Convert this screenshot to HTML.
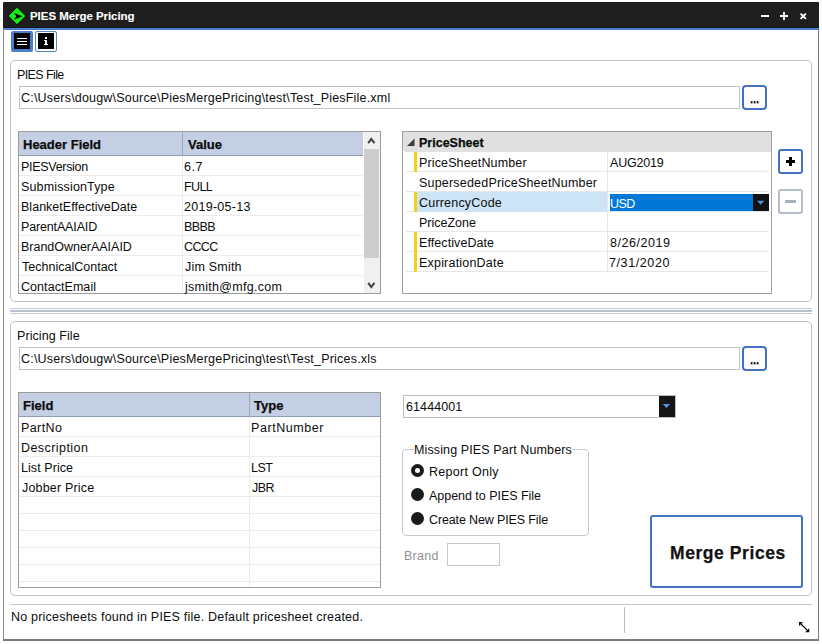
<!DOCTYPE html>
<html><head><meta charset="utf-8">
<style>
*{margin:0;padding:0;box-sizing:border-box}
html,body{width:822px;height:644px;overflow:hidden;background:#fff}
body{position:relative;font-family:"Liberation Sans",sans-serif;font-size:12px;color:#1a1a1a}
.a{position:absolute}
.t{position:absolute;white-space:nowrap;line-height:14px;font-size:12.5px;color:#0c0c0c}
.b{font-weight:bold;-webkit-text-stroke:0.25px currentColor}
</style></head><body>

<!-- window frame -->
<div class="a" style="left:3px;top:2px;width:816px;height:26px;background:#1e1e1e;border-radius:1px 1px 0 0"></div>
<div class="a" style="left:3px;top:27px;width:816px;height:1px;background:#0c1626"></div>
<div class="a" style="left:3px;top:28px;width:816px;height:1px;background:#4f86d0"></div>
<div class="a" style="left:3px;top:29px;width:816px;height:1px;background:#4476c3"></div>
<div class="a" style="left:3px;top:30px;width:1px;height:610px;background:#8a8a8a"></div>
<div class="a" style="left:818px;top:30px;width:1px;height:610px;background:#7a7a7a"></div>
<div class="a" style="left:3px;top:639px;width:816px;height:2px;background:#7a7a7a"></div>

<!-- icon -->
<svg class="a" style="left:7px;top:6px" width="20" height="20" viewBox="0 0 20 20">
  <path d="M10 0.6 L19.3 9.9 L10 19.2 L0.7 9.9 Z" fill="#030803"/>
  <path d="M10 1.6 L18.3 9.9 L10 18.2 L1.7 9.9 Z" fill="#14ee14"/>
  <path d="M6.9 6.9 L15.2 10.3 L6.9 13.7 L9.3 10.3 Z" fill="#000"/>
  <path d="M9.8 8.3 L15.2 10.3 L9.8 12.3 Z" fill="#000"/>
</svg>
<div class="t b" style="left:30px;top:9px;font-size:11.5px;color:#fff;-webkit-text-stroke:0.1px #fff;letter-spacing:-0.05px">PIES Merge Pricing</div>

<!-- title buttons -->
<div class="a" style="left:761px;top:15px;width:8px;height:2px;background:#fff"></div>
<div class="a" style="left:780px;top:15px;width:8px;height:2px;background:#fff"></div>
<div class="a" style="left:783px;top:12px;width:2px;height:8px;background:#fff"></div>
<svg class="a" style="left:799px;top:11px" width="9" height="9" viewBox="0 0 9 9"><path d="M1.6 2.6 L6.9 7.9 M6.9 2.6 L1.6 7.9" stroke="#fff" stroke-width="2"/></svg>

<!-- toolbar buttons -->
<div class="a" style="left:11px;top:31px;width:22px;height:21px;background:#4a7dca;border-radius:2px"></div>
<div class="a" style="left:14px;top:33px;width:16px;height:16px;background:#000"></div>
<div class="a" style="left:17px;top:38px;width:10px;height:1px;background:#fff"></div>
<div class="a" style="left:17px;top:41px;width:10px;height:1px;background:#fff"></div>
<div class="a" style="left:17px;top:44px;width:10px;height:1px;background:#fff"></div>

<div class="a" style="left:35px;top:31px;width:22px;height:21px;border:1px solid #5a86c8;background:#fff;border-radius:2px"></div>
<div class="a" style="left:38px;top:33px;width:16px;height:16px;background:#000"></div>
<svg class="a" style="left:38px;top:33px" width="16" height="16" viewBox="0 0 16 16" shape-rendering="crispEdges"><rect x="6.6" y="3.8" width="2.4" height="1.8" fill="#fff"/><rect x="6.8" y="6.5" width="2.2" height="5.5" fill="#fff"/><rect x="5.8" y="6.5" width="1.2" height="1" fill="#fff"/><rect x="5.8" y="11" width="4.2" height="1" fill="#fff"/></svg>

<!-- ===== PIES File group ===== -->
<div class="a" style="left:10px;top:60px;width:802px;height:242px;border:1px solid #bcc1cd;border-radius:5px"></div>
<div class="t" style="left:17px;top:68px;letter-spacing:-0.6px">PIES File</div>
<div class="a" style="left:19px;top:86px;width:721px;height:23px;border:1px solid #bdc5c6"></div>
<div class="t" style="left:21px;top:91px;letter-spacing:0.19px">C:\Users\dougw\Source\PiesMergePricing\test\Test_PiesFile.xml</div>
<div class="a" style="left:742px;top:85px;width:25px;height:25px;border:2px solid #4273c1;border-radius:4px"></div>
<svg class="a" style="left:750px;top:101px" width="10" height="3" viewBox="0 0 10 3"><rect x="0.7" y="0.1" width="1.8" height="2.3" fill="#1a1010"/><rect x="3.7" y="0.1" width="1.8" height="2.3" fill="#1a1010"/><rect x="6.7" y="0.1" width="1.8" height="2.3" fill="#1a1010"/></svg>

<!-- header grid -->
<div class="a" style="left:18px;top:131px;width:363px;height:163px;border:1px solid #9c9c9c;background:#fff;overflow:hidden">
  <div class="a" style="left:0;top:0;width:344px;height:24px;background:#c4cfe3;border-bottom:1px solid #8e9db2"></div>
  <div class="a" style="left:163px;top:0;width:1px;height:23px;background:#9aa8bb"></div>
  <div class="a" style="left:163px;top:24px;width:1px;height:140px;background:#ececec"></div>
  <div class="a" style="left:0;top:43px;width:344px;height:1px;background:#ececec"></div>
  <div class="a" style="left:0;top:63px;width:344px;height:1px;background:#ececec"></div>
  <div class="a" style="left:0;top:83px;width:344px;height:1px;background:#ececec"></div>
  <div class="a" style="left:0;top:103px;width:344px;height:1px;background:#ececec"></div>
  <div class="a" style="left:0;top:123px;width:344px;height:1px;background:#ececec"></div>
  <div class="a" style="left:0;top:143px;width:344px;height:1px;background:#ececec"></div>
  <!-- scrollbar -->
  <div class="a" style="left:345px;top:0;width:16px;height:161px;background:#f0f0f0"></div>
  <div class="a" style="left:345px;top:17px;width:15px;height:109px;background:#cdcdcd"></div>
  <svg class="a" style="left:347px;top:4px" width="11" height="9" viewBox="0 0 11 9"><path d="M2.2 7.2 L5.3 3 L8.4 7.2" stroke="#444" stroke-width="2.1" fill="none"/></svg>
  <svg class="a" style="left:347px;top:148.5px" width="11" height="9" viewBox="0 0 11 9"><path d="M2.2 1.8 L5.3 6 L8.4 1.8" stroke="#444" stroke-width="2.1" fill="none"/></svg>
</div>
<div class="t b" style="left:23px;top:138px;font-size:13px;letter-spacing:0px">Header Field</div>
<div class="t b" style="left:188px;top:138px;font-size:13px;letter-spacing:0px">Value</div>
<div class="t" style="left:21px;top:160px;letter-spacing:-0.3px">PIESVersion</div>
<div class="t" style="left:184px;top:160px;letter-spacing:0.5px">6.7</div>
<div class="t" style="left:21px;top:180px;letter-spacing:0.15px">SubmissionType</div>
<div class="t" style="left:184px;top:180px;letter-spacing:-0.6px">FULL</div>
<div class="t" style="left:21px;top:200px;letter-spacing:0.02px">BlanketEffectiveDate</div>
<div class="t" style="left:184px;top:200px;letter-spacing:0.27px">2019-05-13</div>
<div class="t" style="left:21px;top:220px;letter-spacing:-0.15px">ParentAAIAID</div>
<div class="t" style="left:184px;top:220px;letter-spacing:-0.6px">BBBB</div>
<div class="t" style="left:21px;top:240px;letter-spacing:-0.02px">BrandOwnerAAIAID</div>
<div class="t" style="left:184px;top:240px;letter-spacing:-0.6px">CCCC</div>
<div class="t" style="left:22px;top:260px;letter-spacing:0.01px">TechnicalContact</div>
<div class="t" style="left:185px;top:260px;letter-spacing:0.21px">Jim Smith</div>
<div class="t" style="left:21px;top:280px;letter-spacing:0.06px">ContactEmail</div>
<div class="t" style="left:185px;top:280px;letter-spacing:0.28px">jsmith@mfg.com</div>

<!-- property grid -->
<div class="a" style="left:402px;top:131px;width:370px;height:163px;border:1px solid #a0a0a0;background:#fff;overflow:hidden">
  <div class="a" style="left:0;top:0;width:368px;height:20px;background:#e0e0e0;border-bottom-left-radius:4px"></div>
  <svg class="a" style="left:2px;top:4.5px" width="10" height="10" viewBox="0 0 10 10"><path d="M9.5 1.5 L9.5 9 L2 9 Z" fill="#3c3c3c"/></svg>
  <div class="a" style="left:3px;top:39px;width:363px;height:1px;background:#e6e6e6"></div>
  <div class="a" style="left:3px;top:59px;width:363px;height:1px;background:#e6e6e6"></div>
  <div class="a" style="left:3px;top:79px;width:363px;height:1px;background:#e6e6e6"></div>
  <div class="a" style="left:3px;top:99px;width:363px;height:1px;background:#e6e6e6"></div>
  <div class="a" style="left:3px;top:119px;width:363px;height:1px;background:#e6e6e6"></div>
  <div class="a" style="left:3px;top:139px;width:363px;height:1px;background:#e6e6e6"></div>
  <div class="a" style="left:204px;top:20px;width:1px;height:120px;background:#e6e6e6"></div>
  <!-- currency highlight -->
  <div class="a" style="left:12px;top:60px;width:192px;height:20px;background:#cde3f6"></div>
  <!-- yellow bars -->
  <div class="a" style="left:11px;top:20px;width:3px;height:20px;background:#f2d11b"></div>
  <div class="a" style="left:11px;top:60px;width:3px;height:20px;background:#f2d11b"></div>
  <div class="a" style="left:11px;top:100px;width:3px;height:40px;background:#f2d11b"></div>
  <!-- USD combo -->
  <div class="a" style="left:207px;top:62px;width:144px;height:17px;background:#0078d7"></div>
  <div class="a" style="left:350px;top:62px;width:16px;height:17px;background:#121212"></div>
  <svg class="a" style="left:353px;top:68px" width="10" height="6" viewBox="0 0 10 6"><path d="M1 0.7 L8.4 0.7 L4.7 4.7 Z" fill="#5c90e0"/></svg>
</div>
<div class="t b" style="left:419px;top:136px;font-size:12.5px;letter-spacing:0px">PriceSheet</div>
<div class="t" style="left:419px;top:156px;letter-spacing:0.13px">PriceSheetNumber</div>
<div class="t" style="left:610px;top:156px;letter-spacing:-0.2px">AUG2019</div>
<div class="t" style="left:419px;top:176px;letter-spacing:0.2px">SupersededPriceSheetNumber</div>
<div class="t" style="left:419px;top:196px;letter-spacing:0.2px">CurrencyCode</div>
<div class="t" style="left:610px;top:197px;color:#fff;letter-spacing:-0.5px">USD</div>
<div class="t" style="left:419px;top:216px;letter-spacing:-0.01px">PriceZone</div>
<div class="t" style="left:419px;top:236px;letter-spacing:0.08px">EffectiveDate</div>
<div class="t" style="left:610px;top:236px;letter-spacing:0.55px">8/26/2019</div>
<div class="t" style="left:419px;top:256px;letter-spacing:0.2px">ExpirationDate</div>
<div class="t" style="left:609px;top:256px;letter-spacing:0.6px">7/31/2020</div>

<!-- plus / minus -->
<div class="a" style="left:778px;top:149px;width:25px;height:25px;border:2px solid #4273c1;border-radius:3px"></div>
<div class="a" style="left:786px;top:160px;width:9px;height:3px;background:#000"></div>
<div class="a" style="left:789px;top:157px;width:3px;height:9px;background:#000"></div>
<div class="a" style="left:778px;top:189px;width:25px;height:25px;border:2px solid #b4bdc9;border-radius:3px"></div>
<div class="a" style="left:785px;top:200px;width:11px;height:3px;background:#aab0ba"></div>

<!-- splitter -->
<div class="a" style="left:10px;top:308px;width:802px;height:1px;background:#c9cdd3"></div>
<div class="a" style="left:10px;top:310px;width:802px;height:2px;background:#b7c2d0"></div>
<div class="a" style="left:10px;top:313px;width:802px;height:1px;background:#cacaca"></div>

<!-- ===== Pricing File group ===== -->
<div class="a" style="left:10px;top:321px;width:802px;height:275px;border:1px solid #bcc1cd;border-radius:5px"></div>
<div class="t" style="left:17px;top:329px;letter-spacing:0.07px">Pricing File</div>
<div class="a" style="left:19px;top:347px;width:721px;height:23px;border:1px solid #bdc5c6"></div>
<div class="t" style="left:21px;top:352px;letter-spacing:0.2px">C:\Users\dougw\Source\PiesMergePricing\test\Test_Prices.xls</div>
<div class="a" style="left:742px;top:346px;width:25px;height:25px;border:2px solid #4273c1;border-radius:4px"></div>
<svg class="a" style="left:750px;top:362px" width="10" height="3" viewBox="0 0 10 3"><rect x="0.7" y="0.1" width="1.8" height="2.3" fill="#1a1010"/><rect x="3.7" y="0.1" width="1.8" height="2.3" fill="#1a1010"/><rect x="6.7" y="0.1" width="1.8" height="2.3" fill="#1a1010"/></svg>

<!-- lower grid -->
<div class="a" style="left:18px;top:392px;width:363px;height:196px;border:1px solid #9c9c9c;background:#fff;overflow:hidden">
  <div class="a" style="left:0;top:0;width:361px;height:24px;background:#c4cfe3;border-bottom:1px solid #8e9db2"></div>
  <div class="a" style="left:230px;top:0;width:1px;height:23px;background:#9aa8bb"></div>
  <div class="a" style="left:230px;top:24px;width:1px;height:170px;background:#ececec"></div>
  <div class="a" style="left:0;top:43px;width:361px;height:1px;background:#ececec"></div>
  <div class="a" style="left:0;top:63px;width:361px;height:1px;background:#ececec"></div>
  <div class="a" style="left:0;top:83px;width:361px;height:1px;background:#ececec"></div>
  <div class="a" style="left:0;top:103px;width:361px;height:1px;background:#ececec"></div>
  <div class="a" style="left:0;top:120px;width:361px;height:1px;background:#ececec"></div>
  <div class="a" style="left:0;top:137px;width:361px;height:1px;background:#ececec"></div>
  <div class="a" style="left:0;top:154px;width:361px;height:1px;background:#ececec"></div>
  <div class="a" style="left:0;top:171px;width:361px;height:1px;background:#ececec"></div>
  <div class="a" style="left:0;top:188px;width:361px;height:1px;background:#ececec"></div>
</div>
<div class="t b" style="left:23px;top:399px;font-size:13px;letter-spacing:0px">Field</div>
<div class="t b" style="left:254px;top:399px;font-size:13px;letter-spacing:0px">Type</div>
<div class="t" style="left:21px;top:421px;letter-spacing:0.4px">PartNo</div>
<div class="t" style="left:251px;top:421px;letter-spacing:0.56px">PartNumber</div>
<div class="t" style="left:21px;top:441px;letter-spacing:0.44px">Description</div>
<div class="t" style="left:21px;top:461px;letter-spacing:0.07px">List Price</div>
<div class="t" style="left:251px;top:461px;letter-spacing:-0.5px">LST</div>
<div class="t" style="left:22px;top:481px;letter-spacing:0.18px">Jobber Price</div>
<div class="t" style="left:252px;top:481px;letter-spacing:-0.5px">JBR</div>

<!-- combo 61444001 -->
<div class="a" style="left:403px;top:395px;width:273px;height:23px;border:1px solid #b9bdc2"></div>
<div class="a" style="left:659px;top:396px;width:16px;height:21px;background:#161616"></div>
<svg class="a" style="left:662px;top:403px" width="10" height="6" viewBox="0 0 10 6"><path d="M0.8 0.9 L8.1 0.9 L4.45 5 Z" fill="#5c90e0"/></svg>
<div class="t" style="left:406px;top:400px;letter-spacing:0.1px">61444001</div>

<!-- missing group -->
<div class="a" style="left:402px;top:449px;width:187px;height:87px;border:1px solid #c4cad2;border-radius:4px"></div>
<div class="a" style="left:414px;top:446px;width:158px;height:6px;background:#fff"></div>
<div class="t" style="left:414px;top:443px;letter-spacing:0.12px">Missing PIES Part Numbers</div>
<div class="a" style="left:411px;top:464px;width:13px;height:13px;border-radius:50%;background:#1a1a1a"></div>
<div class="a" style="left:415px;top:468px;width:5px;height:5px;border-radius:50%;background:#fff"></div>
<div class="t" style="left:429px;top:465px;letter-spacing:0.28px">Report Only</div>
<div class="a" style="left:411px;top:488px;width:13px;height:13px;border-radius:50%;background:#1a1a1a"></div>
<div class="t" style="left:429px;top:489px;letter-spacing:-0.03px">Append to PIES File</div>
<div class="a" style="left:411px;top:512px;width:13px;height:13px;border-radius:50%;background:#1a1a1a"></div>
<div class="t" style="left:429px;top:513px;letter-spacing:-0.13px">Create New PIES File</div>

<!-- brand -->
<div class="t" style="left:404px;top:549px;color:#929292;letter-spacing:0.28px">Brand</div>
<div class="a" style="left:447px;top:543px;width:53px;height:23px;border:1px solid #c6c6c6"></div>

<!-- merge button -->
<div class="a" style="left:650px;top:515px;width:153px;height:73px;border:2px solid #4273c1;border-radius:3px"></div>
<div class="t b" style="left:670px;top:543px;font-size:17.5px;line-height:20px;color:#111;letter-spacing:0.57px">Merge Prices</div>

<!-- status bar -->
<div class="a" style="left:10px;top:604px;width:802px;height:1px;background:#c4c8d0"></div>
<div class="t" style="left:11px;top:610px;letter-spacing:0.21px">No pricesheets found in PIES file. Default pricesheet created.</div>
<div class="a" style="left:624px;top:607px;width:1px;height:26px;background:#b8bcc4"></div>
<svg class="a" style="left:797px;top:620px" width="14" height="14" viewBox="0 0 14 14">
  <path d="M3 3 L11.3 11.3" stroke="#000" stroke-width="1.2"/>
  <path d="M2 2 L6 2 L2 6 Z M12.2 12.2 L8.2 12.2 L12.2 8.2 Z" fill="#000"/>
</svg>

</body></html>
